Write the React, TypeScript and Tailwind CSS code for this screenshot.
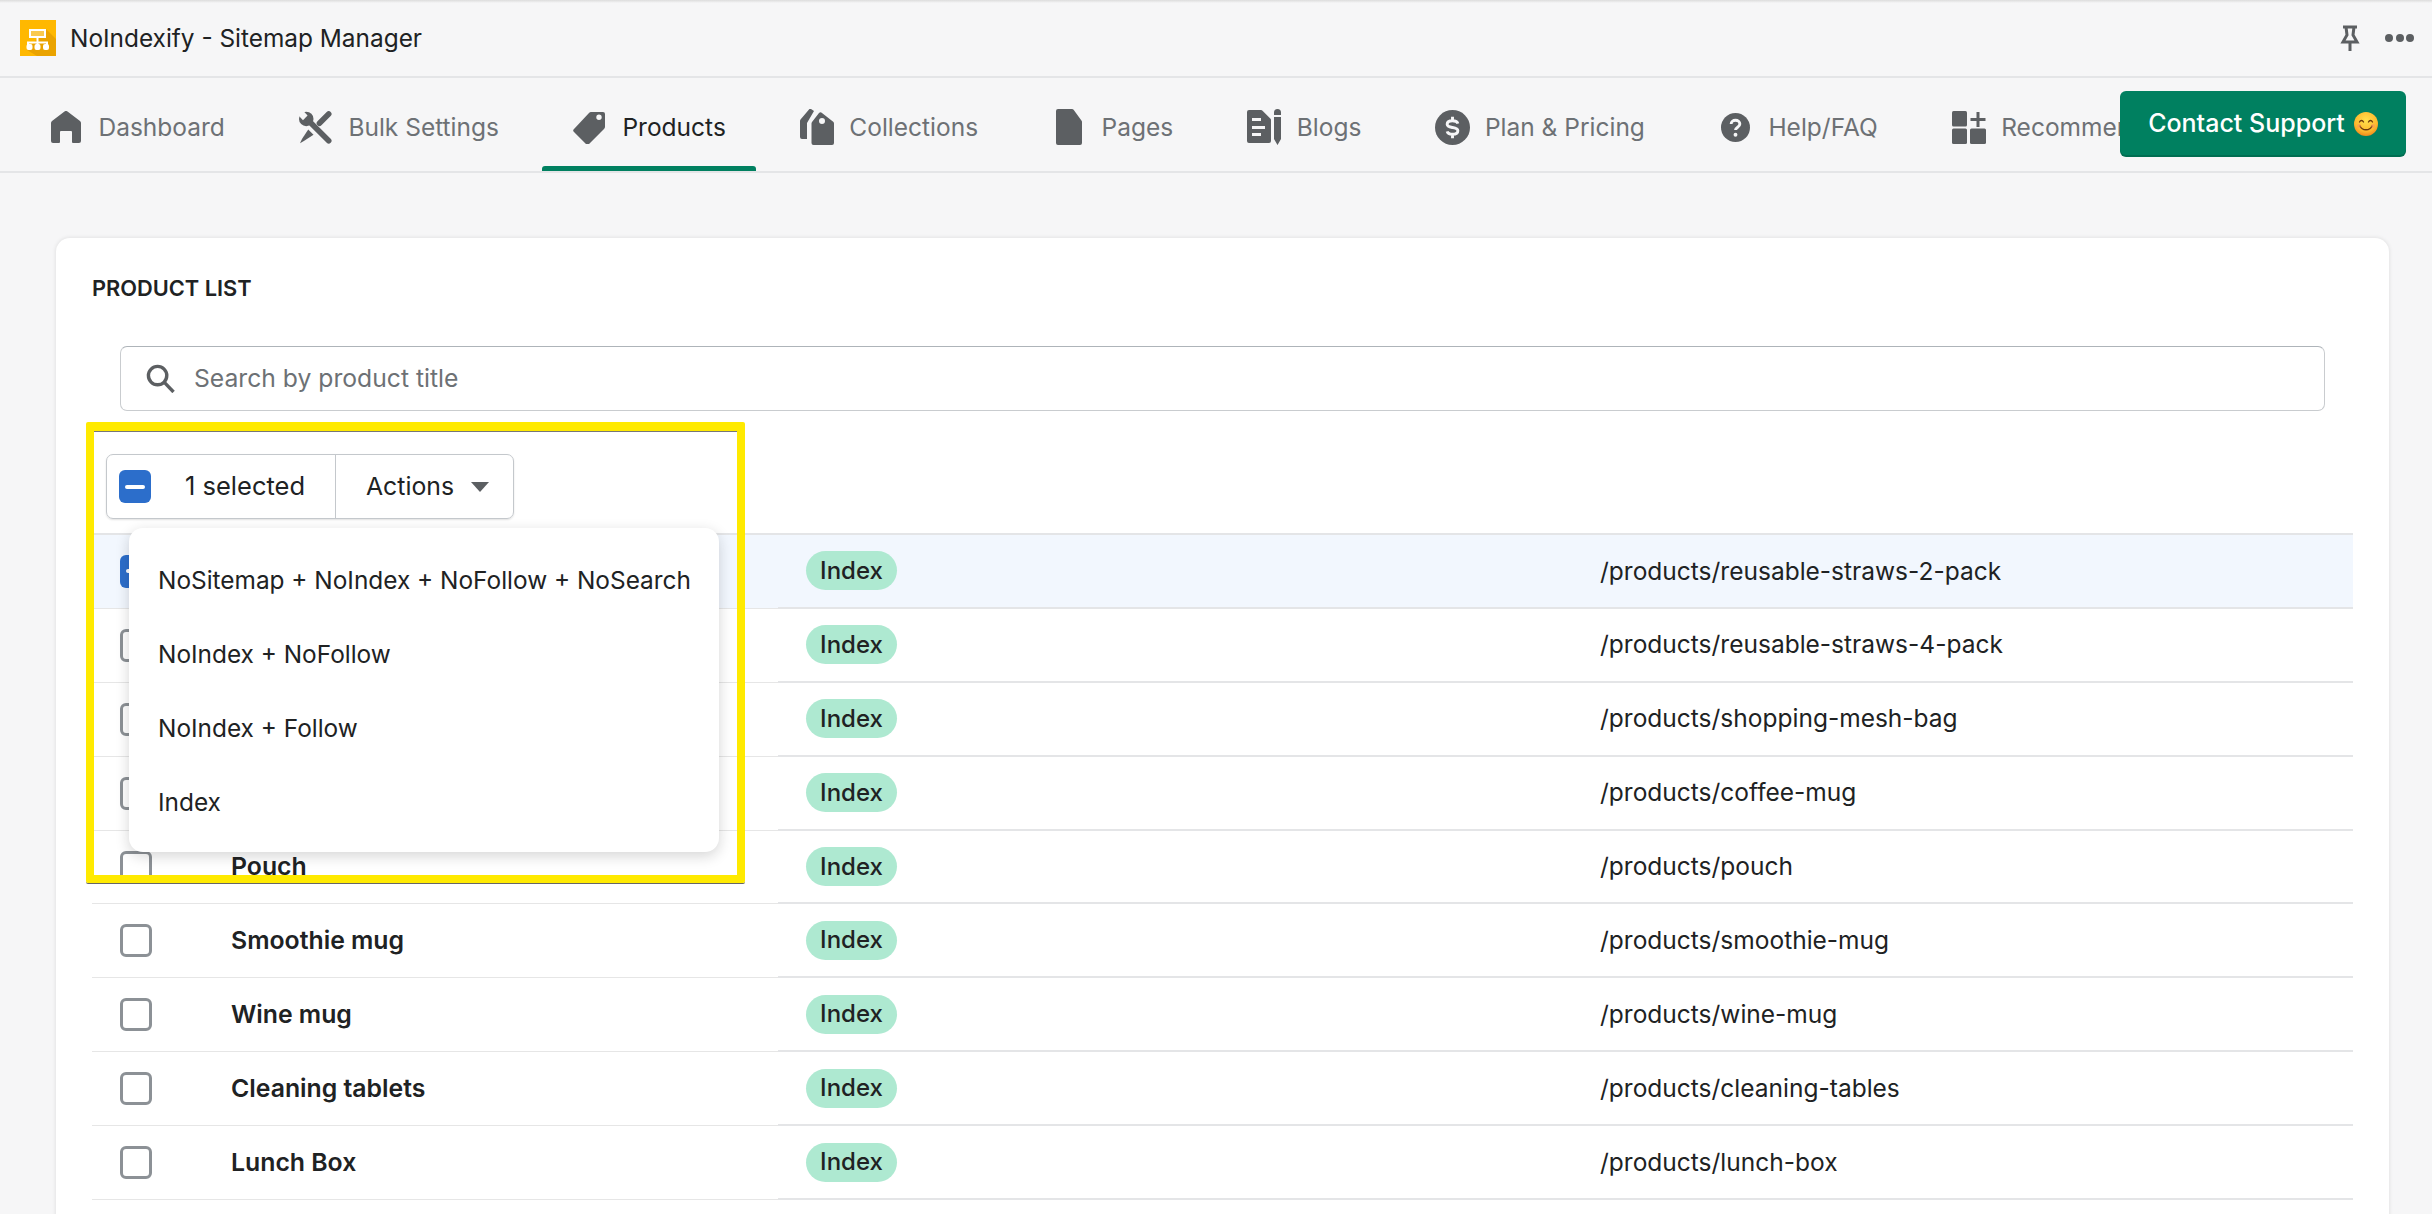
const font = "font-['Inter',sans-serif]";

const tabs = [
  { label: 'Dashboard', icon: <HomeIcon /> },
  { label: 'Bulk Settings', icon: <ToolsIcon /> },
  { label: 'Products', icon: <TagIcon />, active: true },
  { label: 'Collections', icon: <TagsIcon /> },
  { label: 'Pages', icon: <PageIcon /> },
  { label: 'Blogs', icon: <BlogIcon /> },
  { label: 'Plan & Pricing', icon: <DollarIcon /> },
  { label: 'Help/FAQ', icon: <HelpIcon /> },
  { label: 'Recommendations', icon: <AppsIcon /> },
];

const rows = [
  { name: '', path: '/products/reusable-straws-2-pack', selected: true },
  { name: '', path: '/products/reusable-straws-4-pack' },
  { name: '', path: '/products/shopping-mesh-bag' },
  { name: '', path: '/products/coffee-mug' },
  { name: 'Pouch', path: '/products/pouch' },
  { name: 'Smoothie mug', path: '/products/smoothie-mug' },
  { name: 'Wine mug', path: '/products/wine-mug' },
  { name: 'Cleaning tablets', path: '/products/cleaning-tables' },
  { name: 'Lunch Box', path: '/products/lunch-box' },
];

const actions = ['NoSitemap + NoIndex + NoFollow + NoSearch', 'NoIndex + NoFollow', 'NoIndex + Follow', 'Index'];

function HomeIcon() {
  return (
    <svg viewBox="0 0 30 32" className="h-[32px] w-[30px] fill-[#5c5f62]">
      <path d="M13.500.6a2.200 2.200 0 0 1 3 0L29 10a2.500 2.500 0 0 1 1 2v18a2 2 0 0 1-2 2h-6a1 1 0 0 1-1-1V21a1 1 0 0 0-1-1H10a1 1 0 0 0-1 1v10a1 1 0 0 1-1 1H2a2 2 0 0 1-2-2V12a2.500 2.500 0 0 1 1-2z" />
    </svg>
  );
}

function ToolsIcon() {
  return (
    <svg viewBox="0 0 100 100" className="h-[33px] w-[33px]">
      <circle cx="22" cy="24" r="22" fill="#5c5f62" />
      <path d="M26 14 12 28-8 6 6-8z" fill="#f6f6f7" />
      <path d="M30 30 90 90" stroke="#5c5f62" strokeWidth="17" strokeLinecap="round" />
      <path d="M90 9 62 37" stroke="#5c5f62" strokeWidth="17" strokeLinecap="round" />
      <path d="M28 56 44 72 16 90 3 98l6-13z" fill="#5c5f62" />
    </svg>
  );
}

function TagIcon() {
  return (
    <svg viewBox="0 0 33 33" className="h-[33px] w-[33px] fill-[#5c5f62]">
      <path fillRule="evenodd" d="M16 2a3 3 0 0 1 2-1h12a2 2 0 0 1 2 2v13a3 3 0 0 1-1 2L16 33a2 2 0 0 1-3 0L1 21a2 2 0 0 1 0-3zM26 3.500a2.700 2.700 0 1 0 0 5.400 2.700 2.700 0 0 0 0-5.400z" />
    </svg>
  );
}

function TagsIcon() {
  return (
    <svg viewBox="0 0 34 36" className="h-[36px] w-[34px] fill-[#5c5f62]">
      <path d="M11 0 14 2 7 14v16H2a2 2 0 0 1-2-2V12a3 3 0 0 1 .5-1.500L9 .5a1.500 1.500 0 0 1 2-.5z" />
      <path fillRule="evenodd" d="M22 4a2 2 0 0 0-3 0l-7 9a3 3 0 0 0-.5 1.500V34a2 2 0 0 0 2 2H32a2 2 0 0 0 2-2V14.500a3 3 0 0 0-.5-1.500zM22 9a3 3 0 1 0 0 6 3 3 0 0 0 0-6z" />
    </svg>
  );
}

function PageIcon() {
  return (
    <svg viewBox="0 0 26 36" className="h-[36px] w-[26px] fill-[#5c5f62]">
      <path d="M2 0h14a2 2 0 0 1 1.600.8l8 11a2 2 0 0 1 .4 1.200v21a2 2 0 0 1-2 2H2a2 2 0 0 1-2-2V2a2 2 0 0 1 2-2z" />
    </svg>
  );
}

function BlogIcon() {
  return (
    <svg viewBox="0 0 34 36" className="h-[36px] w-[34px] fill-[#5c5f62]">
      <path fillRule="evenodd" d="M2 1h12a2 2 0 0 1 1.500.7l8 8a2 2 0 0 1 .5 1.300v21a2 2 0 0 1-2 2H2a2 2 0 0 1-2-2V3a2 2 0 0 1 2-2zm3 8v3h9V9zm0 8v3h13v-3zm0 7v3h9v-3z" />
      <path d="M27 3.500a3.500 3.500 0 0 1 7 0V6h-7zM27 8h7v22l-3.500 6-3.500-6z" />
    </svg>
  );
}

function DollarIcon() {
  return (
    <svg viewBox="0 0 36 36" className="h-[35px] w-[35px]">
      <circle cx="18" cy="18" r="18" className="fill-[#5c5f62]" />
      <path d="M18 7v4M18 25v4M23.500 14c-.5-2-2.500-3-5.500-3-3 0-5.500 1.200-5.500 3.700s2.500 2.800 5.500 3.300 5.500 1 5.500 3.400-2.500 3.600-5.500 3.600-5-1-5.500-3" fill="none" stroke="#f6f6f7" strokeWidth="3" />
    </svg>
  );
}

function HelpIcon() {
  return (
    <svg viewBox="0 0 30 30" className="h-[29px] w-[29px]">
      <circle cx="15" cy="15" r="15" className="fill-[#5c5f62]" />
      <path d="M10.500 11.500c0-2.500 2-4 4.500-4s4.500 1.500 4.500 3.800c0 3.500-4.500 3.200-4.500 6.400" fill="none" stroke="#f6f6f7" strokeWidth="3" />
      <circle cx="15" cy="22.500" r="2" fill="#f6f6f7" />
    </svg>
  );
}

function AppsIcon() {
  return (
    <svg viewBox="0 0 34 33" className="h-[33px] w-[34px] fill-[#5c5f62]">
      <rect x="0" y="0" width="15" height="15.500" rx="1.500" />
      <rect x="0" y="17.500" width="15" height="15.500" rx="1.500" />
      <rect x="18" y="17.500" width="16" height="15.500" rx="1.500" />
      <path d="M24.500 1h3v6h6v3h-6v6h-3v-6h-6V7h6z" />
    </svg>
  );
}

function LogoIcon() {
  return (
    <svg viewBox="0 0 36 36" className="h-[36px] w-[36px] shrink-0">
      <rect width="36" height="36" fill="#ffb800" />
      <path d="M26 9 36 19v17H17L7 30z" fill="#eaa300" />
      <rect x="9" y="9" width="17" height="9" fill="#fff" />
      <rect x="11" y="11" width="13" height="5" fill="#f9c94f" />
      <path d="M16.500 18h2v3.500H28V25h-2v-1.500H18.500V25h-2v-1.500H9V25H7v-3.500h9.500z" fill="#fff" />
      <rect x="6.500" y="24" width="6" height="6" rx="2" fill="#fff" />
      <rect x="14.500" y="24" width="6" height="6" rx="2" fill="#fff" />
      <rect x="23" y="24" width="6" height="6" rx="2" fill="#fff" />
    </svg>
  );
}

function SmileEmoji() {
  return (
    <svg viewBox="0 0 24 24" className="h-[24px] w-[24px]">
      <defs>
        <radialGradient id="face" cx="50%" cy="35%" r="65%">
          <stop offset="0%" stopColor="#ffe14d" />
          <stop offset="70%" stopColor="#fdb92e" />
          <stop offset="100%" stopColor="#f08a1d" />
        </radialGradient>
      </defs>
      <circle cx="12" cy="12" r="12" fill="url(#face)" />
      <path d="M5.500 10c1-2 3-2 4 0M14.500 10c1-2 3-2 4 0M6 14c2 5 10 5 12 0" fill="none" stroke="#6b3a0e" strokeWidth="1.300" strokeLinecap="round" />
      <circle cx="5" cy="14" r="2" fill="#f78a5f" opacity="0.5" />
      <circle cx="19" cy="14" r="2" fill="#f78a5f" opacity="0.5" />
    </svg>
  );
}

function Checkbox() {
  return <div className="h-[33px] w-[32px] shrink-0 rounded-[6px] border-[3px] border-[#8c9196] bg-white" />;
}

function CheckedBox() {
  return (
    <div className="flex h-[33px] w-[32px] shrink-0 items-center justify-center rounded-[6px] bg-[#2c6ecb]">
      <div className="h-[4px] w-[20px] rounded-full bg-white" />
    </div>
  );
}

export default function App() {
  return (
    <div className={`relative flex h-[1214px] w-[2432px] flex-col overflow-hidden bg-[#f6f6f7] text-[#202223] ${font}`}>
      <div className="h-[3px] shrink-0 bg-gradient-to-b from-[#dcdcdc] to-[#f6f6f7]" />
      <header className="flex h-[75px] shrink-0 items-center border-b-2 border-[#e4e5e7] pb-[3px] pl-[20px] pr-[18px]">
        <LogoIcon />
        <span className="ml-[14px] text-[24.400px] leading-none">NoIndexify - Sitemap Manager</span>
        <svg viewBox="0 0 20 26" className="ml-auto h-[26px] w-[20px] fill-none stroke-[#5c5f62] stroke-[3]">
          <path d="M3 2h14M6 2l1 8-4 7h14l-4-7 1-8M10 17v9" />
        </svg>
        <div className="ml-[25px] flex gap-[2.500px]">
          <span className="h-[8px] w-[8px] rounded-full bg-[#5c5f62]" />
          <span className="h-[8px] w-[8px] rounded-full bg-[#5c5f62]" />
          <span className="h-[8px] w-[8px] rounded-full bg-[#5c5f62]" />
        </div>
      </header>
      <nav className="h-[95px] shrink-0 border-b-2 border-[#e4e5e7] pl-[18px]">
        {/* list stops at the support button, the last tab gets cut there */}
        <div className="flex h-[93px] w-[2102px] gap-[13px] overflow-hidden">
          {tabs.map((t) => (
            <div
              key={t.label}
              className={`relative flex h-[93px] shrink-0 items-center gap-[14.500px] px-[30px] pt-[5px] text-[24.500px] ${
                t.active ? 'text-[#202223]' : 'text-[#6d7175]'
              }`}
            >
              <div className="flex w-[36px] justify-center">{t.icon}</div>
              <span>{t.label}</span>
              {t.active && <span className="absolute inset-x-0 bottom-0 h-[5px] rounded-t-[3px] bg-[#008060]" />}
            </div>
          ))}
        </div>
      </nav>
      <button className="absolute right-[26px] top-[91px] flex h-[64px] w-[286px] items-center justify-center gap-[9px] rounded-[6px] bg-[#008060] pt-[2px] text-[25px] font-medium text-white shadow-[0_2px_0_#006e52]">
        Contact Support <SmileEmoji />
      </button>

      <main className="min-h-0 flex-1 pl-[56px] pr-[43px] pt-[65px]">
        <section className="h-[1100px] rounded-[14px] bg-white px-[36px] pt-[38px] shadow-[0_0_4px_rgba(23,24,24,0.12)]">
          <h2 className="h-[24px] text-[21.800px] font-semibold uppercase leading-[24px]">Product list</h2>
          <div className="mx-[28px] mt-[46px] flex h-[65px] items-center rounded-[7px] border border-[#c9cccf] border-t-[#aeb4b9] pl-[25px] text-[24.700px] text-[#6d7175]">
            <svg viewBox="0 0 30 30" className="h-[29px] w-[29px] fill-none stroke-[#5c5f62] stroke-[3.500]">
              <circle cx="12" cy="12" r="9.500" />
              <path d="m19 19 9.500 10" />
            </svg>
            <span className="ml-[19px]">Search by product title</span>
          </div>
          <div className="ml-[14px] mt-[43px] flex h-[65px] w-[408px] items-center rounded-[7px] border border-[#c4c8cc] shadow-[0_1px_2px_rgba(0,0,0,0.12)]">
            <div className="flex h-full w-[229px] items-center border-r border-[#c4c8cc] pl-[12px]">
              <CheckedBox />
              <span className="ml-[34px] text-[25.500px]">1 selected</span>
            </div>
            <span className="ml-[30px] text-[24.800px]">Actions</span>
            <span className="ml-[17px] h-0 w-0 border-x-[9px] border-t-[10px] border-x-transparent border-t-[#5c5f62]" />
          </div>
          <div className="mt-[14px] border-t-2 border-[#e4e5e7]">
            {rows.map((r) => (
              <div key={r.path} className={`flex h-[73.900px] ${r.selected ? 'bg-[#f2f7fe]' : ''}`}>
                <div className="flex w-[686px] items-center border-b border-[#e6e6e6] pl-[28px]">
                  {r.selected ? <CheckedBox /> : <Checkbox />}
                  <span className="ml-[79px] text-[24.800px] font-semibold">{r.name}</span>
                </div>
                <div className="flex w-[822px] items-center border-b-2 border-[#e4e5e7] pl-[28px]">
                  <span className="flex h-[39px] w-[91px] items-center justify-center rounded-full bg-[#aee9d1] text-[24px] font-medium">Index</span>
                </div>
                <div className="flex flex-1 items-center border-b-2 border-[#e4e5e7] text-[24.500px]">{r.path}</div>
              </div>
            ))}
          </div>
        </section>
      </main>

      {/* dropdown + highlight box lie over the table */}
      <div className="absolute left-[129px] top-[528px] flex h-[324px] w-[590px] flex-col justify-center rounded-[14px] bg-white pt-[2px] shadow-[0_4px_14px_rgba(23,24,24,0.18)]">
        {actions.map((a) => (
          <div key={a} className="flex h-[74px] items-center pl-[29px] text-[24.400px]">{a}</div>
        ))}
      </div>
      <div className="absolute left-[86px] top-[422px] h-[461px] w-[659px] rounded-[2px] border-[8px] border-t-[9px] border-[#ffea00] shadow-[0_1px_0_#666,inset_0_1px_0_#777]" />
    </div>
  );
}
